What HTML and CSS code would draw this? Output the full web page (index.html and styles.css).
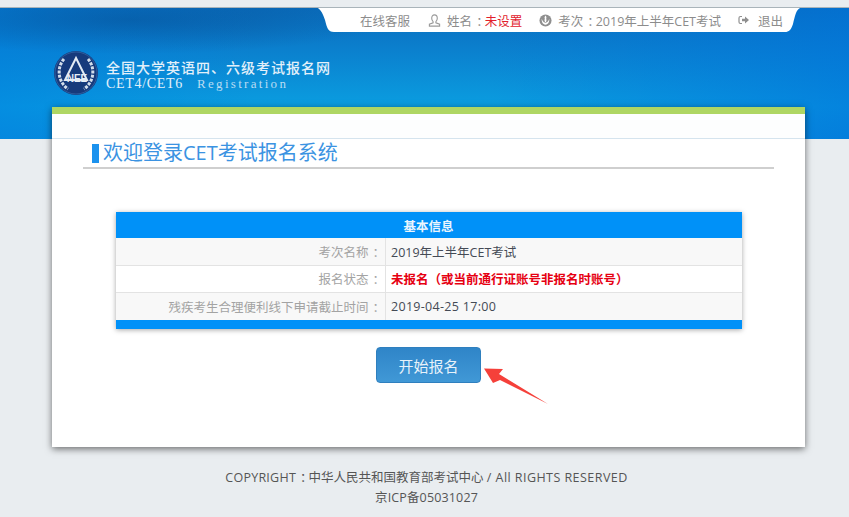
FILE: index.html
```html
<!DOCTYPE html>
<html lang="zh-CN">
<head>
<meta charset="utf-8">
<title>CET考试报名系统</title>
<link rel="stylesheet" href="styles.css">
</head>
<body>
<header class="banner">
  <nav class="tab">
    <a class="tab-item tab-service">在线客服</a>
    <span class="tab-item">
      <svg class="icon" viewBox="0 0 14 14"><path d="M7 1C5 1 4 2.500 4 4.500C4 6.500 5 7.500 5.500 8.300V9.500L1.500 11V13H12.500V11L8.500 9.500V8.300C9 7.500 10 6.500 10 4.500C10 2.500 9 1 7 1Z" fill="none" stroke="#9a9a9a" stroke-width="1.200"/></svg>
      <span>姓名<span class="colon">：</span><b class="warn">未设置</b></span>
    </span>
    <span class="tab-item">
      <svg class="icon" viewBox="0 0 14 14"><circle cx="7" cy="7" r="6.500" fill="#8f8f8f"/><path d="M7 1.500C5.800 3 5.800 4 6.300 5C5.800 6 5.800 7.500 6.600 8.500H7.400C8.200 7.500 8.200 6 7.700 5C8.200 4 8.200 3 7 1.500Z" fill="#fff"/><path d="M3 5C2.500 8 4 11 7 11.500C10 11 11.500 8 11 5C10.500 7 9.500 9 7 9.500C4.500 9 3.500 7 3 5Z" fill="#fff"/></svg>
      <span>考次<span class="colon">：</span>2019年上半年CET考试</span>
    </span>
    <a class="tab-item">
      <svg class="icon icon-exit" viewBox="0 0 12 12"><path d="M4 2.500H2.500C1.700 2.500 1 3.200 1 4V8C1 8.800 1.700 9.500 2.500 9.500H4" fill="none" stroke="#8f8f8f" stroke-width="1.200"/><path d="M4 4.700H7V2.500L11 6L7 9.500V7.300H4Z" fill="#8f8f8f"/></svg>
      <span>退出</span>
    </a>
  </nav>
  <div class="brand">
    <svg class="logo" viewBox="0 0 44 44">
      <circle cx="22" cy="22" r="22" fill="#163a7c"/>
      <circle cx="22" cy="22" r="21" fill="none" stroke="#2f5c9e" stroke-width="1"/>
      <path d="M10 8C3 16 3 30 14 38" fill="none" stroke="#d3deeb" stroke-width="3" stroke-dasharray="3 1.200"/>
      <path d="M34 8C41 16 41 30 30 38" fill="none" stroke="#d3deeb" stroke-width="3" stroke-dasharray="3 1.200"/>
      <path d="M22 7L33 29H11Z" fill="none" stroke="#e2eaf4" stroke-width="2"/>
      <text class="logo-text" x="23" y="31">NEE</text>
    </svg>
    <div class="brand-text">
      <div class="brand-cn">全国大学英语四、六级考试报名网</div>
      <div class="brand-en">CET4/CET6<span class="brand-reg">Registration</span></div>
    </div>
  </div>
</header>

<main class="card">
  <div class="card-top"></div>
  <h1 class="title"><span class="title-text">欢迎登录CET考试报名系统</span></h1>
  <table class="info">
    <colgroup>
      <col class="col-label">
      <col>
    </colgroup>
    <thead>
      <tr><th colspan="2">基本信息</th></tr>
    </thead>
    <tbody>
      <tr><td class="label">考次名称<span class="colon">：</span></td><td class="value">2019年上半年CET考试</td></tr>
      <tr><td class="label">报名状态<span class="colon">：</span></td><td class="value alert">未报名<span class="punct">（</span>或当前通行证账号非报名时账号<span class="punct">）</span></td></tr>
      <tr><td class="label">残疾考生合理便利线下申请截止时间<span class="colon">：</span></td><td class="value date">2019-04-25 17:00</td></tr>
    </tbody>
    <tfoot>
      <tr><td colspan="2"></td></tr>
    </tfoot>
  </table>
  <div class="actions">
    <button class="start" type="button">开始报名</button>
  </div>
  <svg class="arrow" viewBox="0 0 70 40"><path d="M1 .5L20 1L16 6L65 36L17 12L10 15Z" fill="#f5403a"/></svg>
</main>

<footer class="footer">
  <div><span class="footer-lead">COPYRIGHT</span><span class="colon">：</span>中华人民共和国教育部考试中心 <span class="footer-wide">/ All RIGHTS RESERVED</span></div>
  <div class="footer-icp">京ICP备05031027</div>
</footer>
</body>
</html>
```

FILE: styles.css
```css
* {
  box-sizing: border-box;
}

html,
body {
  margin: 0;
  height: 100%;
}

body {
  padding-top: 7px;
  background: #e9edf0;
  font-family: "Open Sans", "Noto Sans CJK SC", sans-serif;
  font-size: 12.5px;
  overflow: hidden;
}

.punct {
  font-family: "Noto Sans CJK TC", sans-serif;
}

.colon {
  padding-left: 4px;
  letter-spacing: -4px;
}

.banner {
  height: 132px;
  border-top: 1px solid #a9b4ba;
  background:
    radial-gradient(ellipse 260px 34px at 130px 12px, rgba(6, 80, 150, .55), transparent),
    linear-gradient(90deg, rgba(0, 130, 225, .55) 0, transparent 30%, transparent 58%, rgba(0, 115, 220, .6) 100%),
    linear-gradient(180deg, #0a6cbc 0, #0b7fcd 30%, #0a9de0 75%, #0a8fdc 100%);
}

.tab {
  width: 482px;
  height: 24px;
  margin-left: 318px;
  padding-right: 17px;
  display: flex;
  justify-content: flex-end;
  align-items: center;
  gap: 17px;
  background: #fff;
  color: #8c8c8c;
  clip-path: path("M0 0H482C478 2 477 8 475 16C473 22 471 24 467 24H16C10 24 9 20 7 12C5 6 3 2 0 0Z");
}

.tab-item {
  display: flex;
  align-items: center;
  gap: 6px;
  white-space: nowrap;
}

.tab-service {
  margin-right: 1px;
}

.icon {
  width: 13px;
  height: 13px;
  display: block;
}

.icon-exit {
  width: 12px;
  height: 12px;
  margin-right: 2px;
}

.warn {
  color: #e2202c;
  font-weight: 400;
}

.brand {
  margin: 19px 0 0 54px;
  display: flex;
  align-items: flex-start;
  gap: 8px;
}

.logo {
  width: 44px;
  height: 44px;
  display: block;
}

.logo-text {
  font-family: "Liberation Sans", sans-serif;
  font-size: 10px;
  font-weight: 700;
  fill: #e6edf6;
  text-anchor: middle;
}

.brand-text {
  padding-top: 8px;
  color: #e2f0fa;
}

.brand-cn {
  font-size: 14px;
  font-weight: 500;
  letter-spacing: 1px;
  line-height: 18px;
}

.brand-en {
  font-family: "Liberation Serif", "Noto Serif", serif;
  font-size: 14px;
  letter-spacing: .7px;
  line-height: 13px;
  white-space: nowrap;
}

.brand-reg {
  margin-left: 14px;
  font-size: 13px;
  letter-spacing: 2.300px;
  color: #b9dcf3;
}

.card {
  position: relative;
  width: 753px;
  height: 340px;
  margin: -32px 0 0 52px;
  border-top: 7px solid #aed663;
  background: #fff;
  box-shadow: 0 2px 7px rgba(0, 0, 0, .55);
}

.card-top {
  height: 25px;
  border-bottom: 1px solid #d5e4ee;
  background: #fdfefe;
}

.title {
  height: 30px;
  margin: 0 31px;
  padding: 2px 0 0 9px;
  border-bottom: 2px solid #cfcfcf;
  font-size: 20px;
  font-weight: 400;
  line-height: 24px;
  color: #3b93e2;
}

.title-text {
  display: flex;
  align-items: center;
  white-space: nowrap;
}

.title-text::before {
  content: "";
  width: 7px;
  height: 19px;
  margin-right: 4px;
  background: #1b92ee;
}

.info {
  width: 626px;
  margin: 43px auto 0;
  border-collapse: collapse;
  table-layout: fixed;
  box-shadow: 0 1px 5px rgba(0, 0, 0, .35);
}

.col-label {
  width: 270px;
}

.info th {
  height: 26px;
  padding: 0;
  background: #0091f8;
  color: #eaf5fe;
  font-size: 12.5px;
  font-weight: 700;
}

.info tbody tr {
  height: 27px;
  background: #f8f8f8;
  border-bottom: 1px solid #e3e3e3;
}

.info tbody tr:nth-child(2) {
  background: #fff;
}

.info tbody tr:last-child {
  height: 28px;
  border-bottom: 0;
}

.info tfoot td {
  height: 9px;
  padding: 0;
  background: #0091f8;
}

.label {
  padding: 0 4px 0 0;
  border-right: 1px solid #e3e3e3;
  text-align: right;
  color: #a3a3a3;
}

.value {
  padding: 0 0 0 5px;
  color: #444a55;
}

.date {
  letter-spacing: .3px;
}

.alert {
  color: #e60012;
  font-weight: 700;
}

.actions {
  margin-top: 18px;
  display: flex;
  justify-content: center;
}

.start {
  width: 105px;
  height: 36px;
  padding: 0;
  border: 1px solid #2f7fbe;
  border-radius: 4px;
  background: linear-gradient(180deg, #2f85c8, #4098d6);
  color: #e8f2fa;
  font-family: inherit;
  font-size: 15px;
}

.arrow {
  position: absolute;
  left: 431px;
  top: 254px;
  width: 70px;
  height: 40px;
}

.footer {
  margin-top: 21px;
  padding-left: 4px;
  text-align: center;
  color: #555;
  line-height: 20px;
}

.footer-lead {
  letter-spacing: .25px;
}

.footer-wide {
  letter-spacing: .45px;
}

.footer-icp {
  letter-spacing: .15px;
}
```
